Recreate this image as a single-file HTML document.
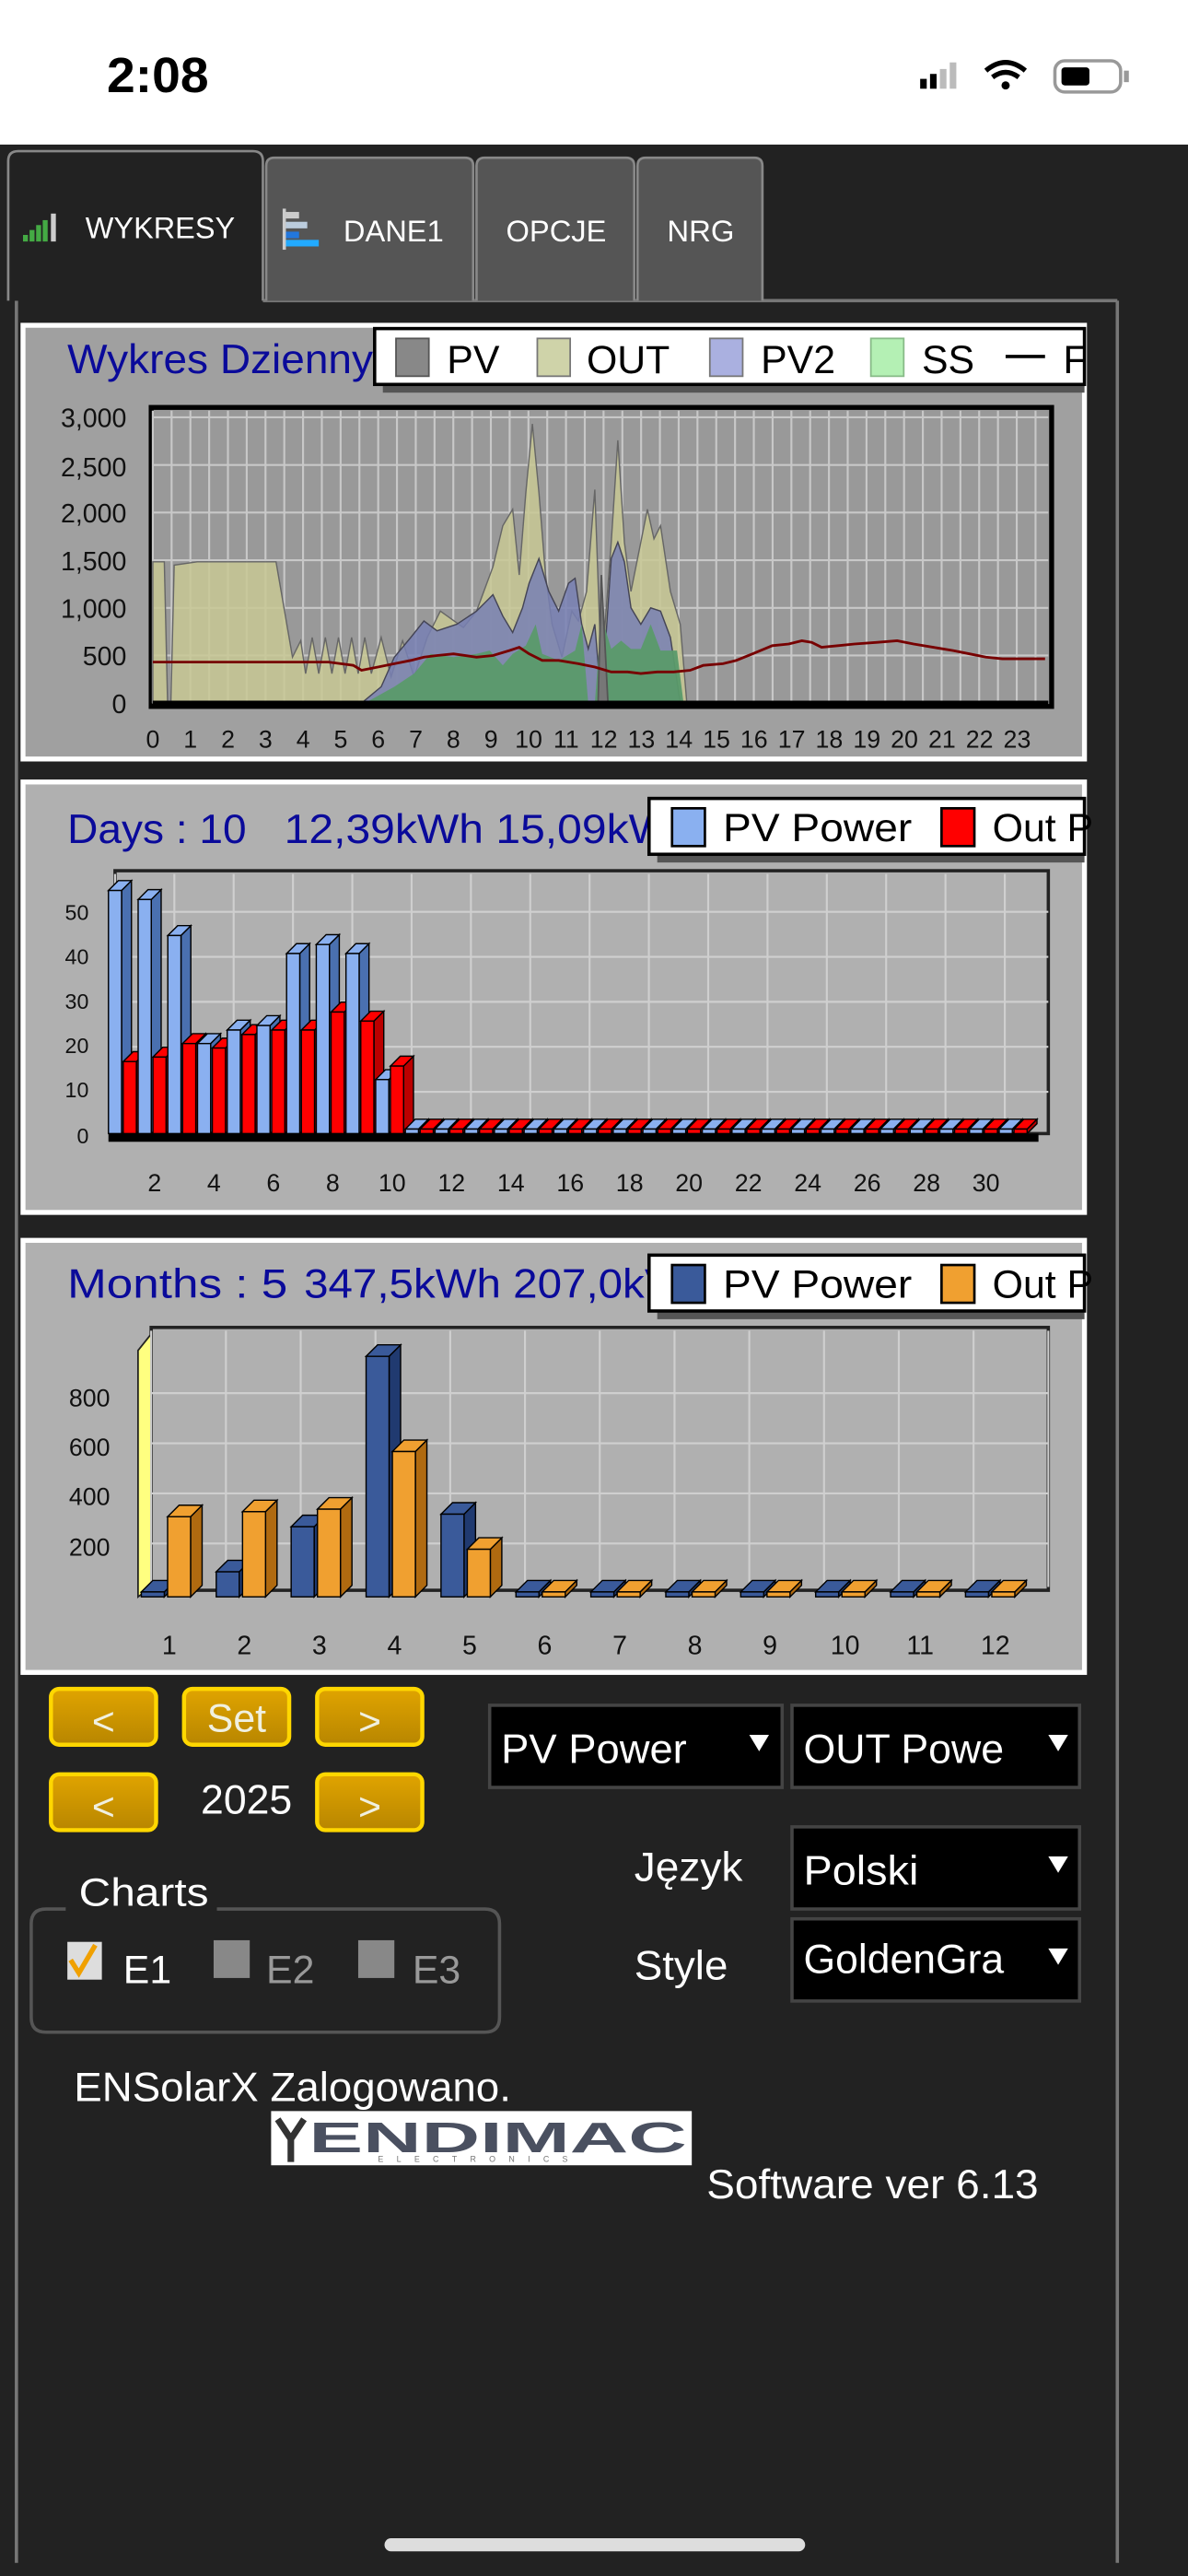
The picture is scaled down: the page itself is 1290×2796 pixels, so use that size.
<!DOCTYPE html>
<html><head><meta charset="utf-8">
<style>
html,body{margin:0;padding:0;background:#222;}
svg{display:block}
text{font-family:"Liberation Sans",sans-serif;}
</style></head>
<body>
<svg id="s" width="1290" height="2796" viewBox="0 0 723 1568" preserveAspectRatio="none">
<defs>
<linearGradient id="gold" x1="0" y1="0" x2="0" y2="1"><stop offset="0" stop-color="#e0a400"/><stop offset="1" stop-color="#b88600"/></linearGradient>
</defs>
<rect width="723" height="1568" fill="#222"/>
<rect width="723" height="88" fill="#fff"/>
<text x="65" y="56" font-size="30" font-weight="bold" fill="#000" textLength="62">2:08</text>
<rect x="560" y="48" width="4" height="6" fill="#000"/><rect x="566" y="45" width="4" height="9" fill="#000"/><rect x="572" y="42" width="4" height="12" fill="#bbb"/><rect x="578" y="38" width="4" height="16" fill="#bbb"/>
<path d="M600 43 q12 -10 24 0 M604 47 q8 -6 16 0" stroke="#000" stroke-width="3" fill="none"/><circle cx="612" cy="52" r="2.5" fill="#000"/>
<rect x="642" y="37" width="40" height="19" rx="6" fill="none" stroke="#999" stroke-width="2"/><rect x="646" y="41" width="17" height="11" rx="2" fill="#000"/><rect x="684" y="43" width="3" height="7" fill="#999"/>
<path d="M10 183 V1560 M680 183 V1560 M160 183 H680" stroke="#777" stroke-width="2" fill="none"/>
<path d="M5 183 V98 q0 -6 6 -6 H154 q6 0 6 6 V183" fill="#222" stroke="#888" stroke-width="1.5"/>
<g fill="#555" stroke="#888" stroke-width="1.5">
<path d="M162 183 V101 q0 -5 5 -5 H283 q5 0 5 5 V183"/>
<path d="M290 183 V101 q0 -5 5 -5 H381 q5 0 5 5 V183"/>
<path d="M388 183 V101 q0 -5 5 -5 H459 q5 0 5 5 V183"/>
</g>
<g fill="#4a4"><rect x="14" y="143" width="3" height="4"/><rect x="18" y="140" width="3" height="7"/><rect x="22" y="137" width="3" height="10"/><rect x="26" y="134" width="3" height="13"/><rect x="31" y="130" width="3" height="17" fill="#ccc"/></g>
<text x="52" y="145" font-size="18" fill="#fff" textLength="91">WYKRESY</text>
<g><rect x="172" y="127" width="2" height="25" fill="#ccc"/><rect x="174" y="129" width="8" height="4" fill="#ccc"/><rect x="174" y="135" width="13" height="4" fill="#bcd"/><rect x="174" y="141" width="8" height="4" fill="#27d"/><rect x="174" y="146" width="20" height="4" fill="#2af"/></g>
<text x="209" y="147" font-size="18" fill="#fff" textLength="61">DANE1</text>
<text x="308" y="147" font-size="18" fill="#fff" textLength="61">OPCJE</text>
<text x="406" y="147" font-size="18" fill="#fff" textLength="41">NRG</text>

<rect x="14" y="198" width="646" height="264" fill="#a0a0a0" stroke="#fff" stroke-width="3"/>
<text x="41" y="227" font-size="25" fill="#0a0a9a" textLength="186">Wykres Dzienny</text>
<rect x="233" y="205" width="427" height="34" fill="#555"/>
<rect x="228" y="200" width="432" height="34" fill="#fff" stroke="#000" stroke-width="2"/>
<rect x="241" y="206" width="20" height="23" fill="#888" stroke="#555"/><text x="272" y="227" font-size="24" fill="#000">PV</text>
<rect x="327" y="206" width="20" height="23" fill="#cfd3a9" stroke="#777"/><text x="357" y="227" font-size="24" fill="#000">OUT</text>
<rect x="432" y="206" width="20" height="23" fill="#aab0e0" stroke="#777"/><text x="463" y="227" font-size="24" fill="#000">PV2</text>
<rect x="530" y="206" width="20" height="23" fill="#b4f0b4" stroke="#8b8"/><text x="561" y="227" font-size="24" fill="#000">SS</text>
<path d="M612 217 H636" stroke="#000" stroke-width="2"/><text x="647" y="227" font-size="24" fill="#000">F</text>
<rect x="92" y="248" width="548" height="182" fill="#999" stroke="#000" stroke-width="3"/>
<g id="g1" stroke="#c8c8c8" stroke-width="1.2"></g>
<g font-size="16" fill="#111" text-anchor="end">
<text x="77" y="260">3,000</text><text x="77" y="290">2,500</text><text x="77" y="318">2,000</text><text x="77" y="347">1,500</text><text x="77" y="376">1,000</text><text x="77" y="405">500</text><text x="77" y="434">0</text></g>
<polygon fill="#c8c894" fill-opacity="0.85" stroke="#666" stroke-width="0.8" points="93,428 93,342 100,342 102,428 104,428 106,344 120,342 168,342 178,400 183,390 186,410 190,388 194,410 198,388 202,410 206,388 210,410 214,388 218,410 222,388 226,410 232,388 238,412 245,390 252,412 260,388 268,372 282,382 290,372 300,345 306,320 312,310 316,350 320,300 324,258 328,300 332,350 336,380 342,400 348,372 352,378 357,360 362,298 366,410 372,330 376,268 380,330 384,360 390,330 394,310 398,328 402,320 408,360 414,380 418,428"/>
<polygon fill="#7880b4" fill-opacity="0.85" stroke="#445" stroke-width="0.8" points="220,428 232,418 240,400 250,388 258,378 266,384 278,380 290,372 300,362 306,375 312,385 318,370 322,355 328,340 334,360 340,372 346,355 350,352 354,380 358,395 362,380 366,428 372,340 376,330 380,342 384,370 390,380 396,370 402,372 408,388 414,428"/>
<polygon fill="#5a9a6a" fill-opacity="0.95" points="222,428 240,418 252,410 262,398 276,400 290,398 298,396 306,405 312,398 320,393 326,380 330,398 340,402 350,396 354,380 358,428 362,428 366,375 372,395 378,390 384,395 390,395 396,380 402,396 412,396 416,428"/>
<path d="M364 428 L366 350 370 428" fill="#777" stroke="#555"/>
<polyline fill="none" stroke="#700" stroke-width="1.6" points="93,403 160,403 180,403 200,403 215,405 220,408 230,406 240,404 250,402 258,400 266,399 276,398 290,400 300,399 310,396 316,394 322,398 330,402 340,402 352,404 362,406 372,409 382,409 390,410 400,409 410,409 420,408 428,405 440,404 448,402 458,398 470,393 480,392 488,390 494,391 500,394 510,393 520,392 534,391 546,390 556,392 568,394 580,396 590,398 600,400 610,401 622,401 636,401"/>
<path d="M93 428 H638" stroke="#000" stroke-width="3"/>
<g id="x1" font-size="15" fill="#111" text-anchor="middle"></g>

<rect x="14" y="476" width="646" height="262" fill="#b0b0b0" stroke="#fff" stroke-width="3"/>
<text x="41" y="513" font-size="25" fill="#0a0a9a" textLength="109">Days : 10</text>
<text x="173" y="513" font-size="25" fill="#0a0a9a" textLength="235">12,39kWh 15,09kW</text>
<rect x="400" y="491" width="260" height="34" fill="#555"/>
<rect x="395" y="486" width="265" height="34" fill="#fff" stroke="#000" stroke-width="2"/>
<rect x="409" y="492" width="20" height="23" fill="#8ab0f0" stroke="#000" stroke-width="1.5"/><text x="440" y="512" font-size="24" fill="#000" textLength="115">PV Power</text>
<rect x="573" y="492" width="20" height="23" fill="#f00" stroke="#000" stroke-width="1.5"/><text x="604" y="512" font-size="24" fill="#000">Out P</text>
<rect x="70" y="530" width="568" height="160" fill="#b0b0b0" stroke="#222" stroke-width="2"/>
<g id="g2" stroke="#cfcfcf" stroke-width="1.2"></g>
<g font-size="13" fill="#111" text-anchor="end"><text x="54" y="560">50</text><text x="54" y="587">40</text><text x="54" y="614">30</text><text x="54" y="641">20</text><text x="54" y="668">10</text><text x="54" y="696">0</text></g>
<g id="b2"></g>
<g id="x2" font-size="15" fill="#111" text-anchor="middle"></g>

<rect x="14" y="755" width="646" height="263" fill="#b0b0b0" stroke="#fff" stroke-width="3"/>
<text x="41" y="790" font-size="25" fill="#0a0a9a" textLength="134">Months : 5</text>
<text x="185" y="790" font-size="25" fill="#0a0a9a" textLength="225">347,5kWh 207,0kV</text>
<rect x="400" y="769" width="260" height="34" fill="#555"/>
<rect x="395" y="764" width="265" height="34" fill="#fff" stroke="#000" stroke-width="2"/>
<rect x="409" y="770" width="20" height="23" fill="#3a5a9a" stroke="#000" stroke-width="1.5"/><text x="440" y="790" font-size="24" fill="#000" textLength="115">PV Power</text>
<rect x="573" y="770" width="20" height="23" fill="#f0a030" stroke="#000" stroke-width="1.5"/><text x="604" y="790" font-size="24" fill="#000">Out P</text>
<rect x="92" y="808" width="546" height="160" fill="#b0b0b0" stroke="#222" stroke-width="2"/>
<polygon points="84,822 92,812 92,966 84,972" fill="#ffff80" stroke="#222"/>
<g id="g3" stroke="#cfcfcf" stroke-width="1.2"></g>
<g font-size="15" fill="#111" text-anchor="end"><text x="67" y="856">800</text><text x="67" y="886">600</text><text x="67" y="916">400</text><text x="67" y="947">200</text></g>
<g id="b3"></g>
<g id="x3" font-size="16" fill="#111" text-anchor="middle"></g>

<g stroke="#ffd700" stroke-width="2.5" fill="url(#gold)">
<rect x="31" y="1028" width="64" height="34" rx="5"/><rect x="112" y="1028" width="64" height="34" rx="5"/><rect x="193" y="1028" width="64" height="34" rx="5"/>
<rect x="31" y="1080" width="64" height="34" rx="5"/><rect x="193" y="1080" width="64" height="34" rx="5"/></g>
<g font-size="24" fill="#f0f0e0" text-anchor="middle"><text x="63" y="1056">&lt;</text><text x="144" y="1054">Set</text><text x="225" y="1056">&gt;</text><text x="63" y="1108">&lt;</text><text x="225" y="1108">&gt;</text></g>
<text x="150" y="1104" font-size="25" fill="#fff" text-anchor="middle">2025</text>
<g fill="#000" stroke="#444" stroke-width="2">
<rect x="298" y="1038" width="178" height="50"/><rect x="482" y="1038" width="175" height="50"/>
<rect x="482" y="1112" width="175" height="50"/><rect x="482" y="1168" width="175" height="50"/></g>
<g font-size="25" fill="#fff"><text x="305" y="1073" textLength="113">PV Power</text><text x="489" y="1073" textLength="122">OUT Powe</text><text x="489" y="1147" textLength="70">Polski</text><text x="489" y="1201" textLength="122">GoldenGra</text>
<text x="386" y="1145" textLength="66">Język</text><text x="386" y="1205" textLength="57">Style</text></g>
<g fill="#fff"><path d="M456 1056 h12 l-6 10z"/><path d="M638 1056 h12 l-6 10z"/><path d="M638 1130 h12 l-6 10z"/><path d="M638 1186 h12 l-6 10z"/></g>
<path d="M40 1162 H28 q-9 0 -9 9 V1228 q0 9 9 9 H295 q9 0 9 -9 V1171 q0 -9 -9 -9 H132" fill="none" stroke="#555" stroke-width="2"/>
<text x="48" y="1160" font-size="24" fill="#fff" textLength="79">Charts</text>
<rect x="41" y="1182" width="21" height="23" fill="#ddd"/><path d="M43 1193 l5 8 l10 -17" stroke="#f0a000" stroke-width="3" fill="none"/>
<text x="75" y="1207" font-size="24" fill="#fff">E1</text>
<rect x="130" y="1181" width="22" height="23" fill="#888"/><text x="162" y="1207" font-size="24" fill="#999">E2</text>
<rect x="218" y="1181" width="22" height="23" fill="#888"/><text x="251" y="1207" font-size="24" fill="#999">E3</text>
<text x="45" y="1279" font-size="25" fill="#fff" textLength="266">ENSolarX Zalogowano.</text>
<rect x="165" y="1285" width="256" height="33" fill="#fff"/>
<path d="M169 1290 l8 12 l8 -12 M177 1302 v14" stroke="#333" stroke-width="4" fill="none"/>
<text x="188" y="1310" font-size="26" font-weight="bold" fill="#4a5060" textLength="230">ENDIMAC</text>
<text x="230" y="1316" font-size="5" fill="#777" letter-spacing="8">ELECTRONICS</text>
<text x="430" y="1338" font-size="25" fill="#fff" textLength="202">Software ver 6.13</text>
<rect x="234" y="1545" width="256" height="8" rx="4" fill="#ddd"/>
</svg>
<script>
var NS="http://www.w3.org/2000/svg";
document.querySelectorAll("text[textLength]").forEach(function(t){t.setAttribute("lengthAdjust","spacingAndGlyphs");});
function el(p,t,a,txt){var e=document.createElementNS(NS,t);for(var k in a)e.setAttribute(k,a[k]);if(txt!==undefined)e.textContent=txt;document.getElementById(p).appendChild(e);return e;}
for(var i=0;i<=48;i++){var x=93+i*11.43;if(x<638)el("g1","line",{x1:x,y1:250,x2:x,y2:428});}
for(var v=0;v<=3000;v+=500){var y=428-v*0.058;el("g1","line",{x1:93,y1:y,x2:638,y2:y});}
for(var h=0;h<24;h++)el("x1","text",{x:93+h*22.87,y:455},h);
for(var i=0;i<16;i++){var x=70+i*36.1;el("g2","line",{x1:x,y1:532,x2:x,y2:688});}
for(var v=10;v<=50;v+=10){var y=692-v*2.74;el("g2","line",{x1:70,y1:y,x2:638,y2:y});}
var B=[54,52,44,20,23,24,40,42,40,12],R=[16,17,20,19,22,23,23,27,25,15];
function bar(g,x,w,h,base,c1,c2,d){var y=base-h;
 el(g,"polygon",{points:(x+w)+","+base+" "+(x+w+d)+","+(base-d)+" "+(x+w+d)+","+(y-d)+" "+(x+w)+","+y,fill:c2,stroke:"#000","stroke-width":0.8});
 el(g,"polygon",{points:x+","+y+" "+(x+d)+","+(y-d)+" "+(x+w+d)+","+(y-d)+" "+(x+w)+","+y,fill:c1,stroke:"#000","stroke-width":0.8});
 el(g,"rect",{x:x,y:y,width:w,height:h,fill:c1,stroke:"#000","stroke-width":0.8});}
el("b2","rect",{x:66,y:690,width:566,height:5,fill:"#000"});
for(var d=0;d<31;d++){var x=66+d*18.07;var b=d<10?B[d]:1,r=d<10?R[d]:1;
 bar("b2",x,8,Math.max(b*2.74,2),690,"#8ab0f0","#4a70b0",6);
 bar("b2",x+9,8,Math.max(r*2.74,2),690,"#f00","#b00",6);}
for(var d=2;d<=30;d+=2)el("x2","text",{x:66+(d-1)*18.07+10,y:725},d);
for(var i=0;i<13;i++){var x=92+i*45.5;el("g3","line",{x1:x,y1:810,x2:x,y2:966});}
for(var v=200;v<=800;v+=200){var y=970-v*0.1525;el("g3","line",{x1:92,y1:y,x2:638,y2:y});}
var MB=[10,100,280,960,330],MO=[320,340,350,580,190];
for(var m=0;m<12;m++){var x=86+m*45.6;var b=m<5?MB[m]:5,o=m<5?MO[m]:5;
 bar("b3",x,14,Math.max(b*0.1525,3),972,"#3a5a9a","#203a70",7);
 bar("b3",x+16,14,Math.max(o*0.1525,3),972,"#f0a030","#b06a10",7);
 el("x3","text",{x:103+m*45.7,y:1007},m+1);}
</script>
</body></html>
